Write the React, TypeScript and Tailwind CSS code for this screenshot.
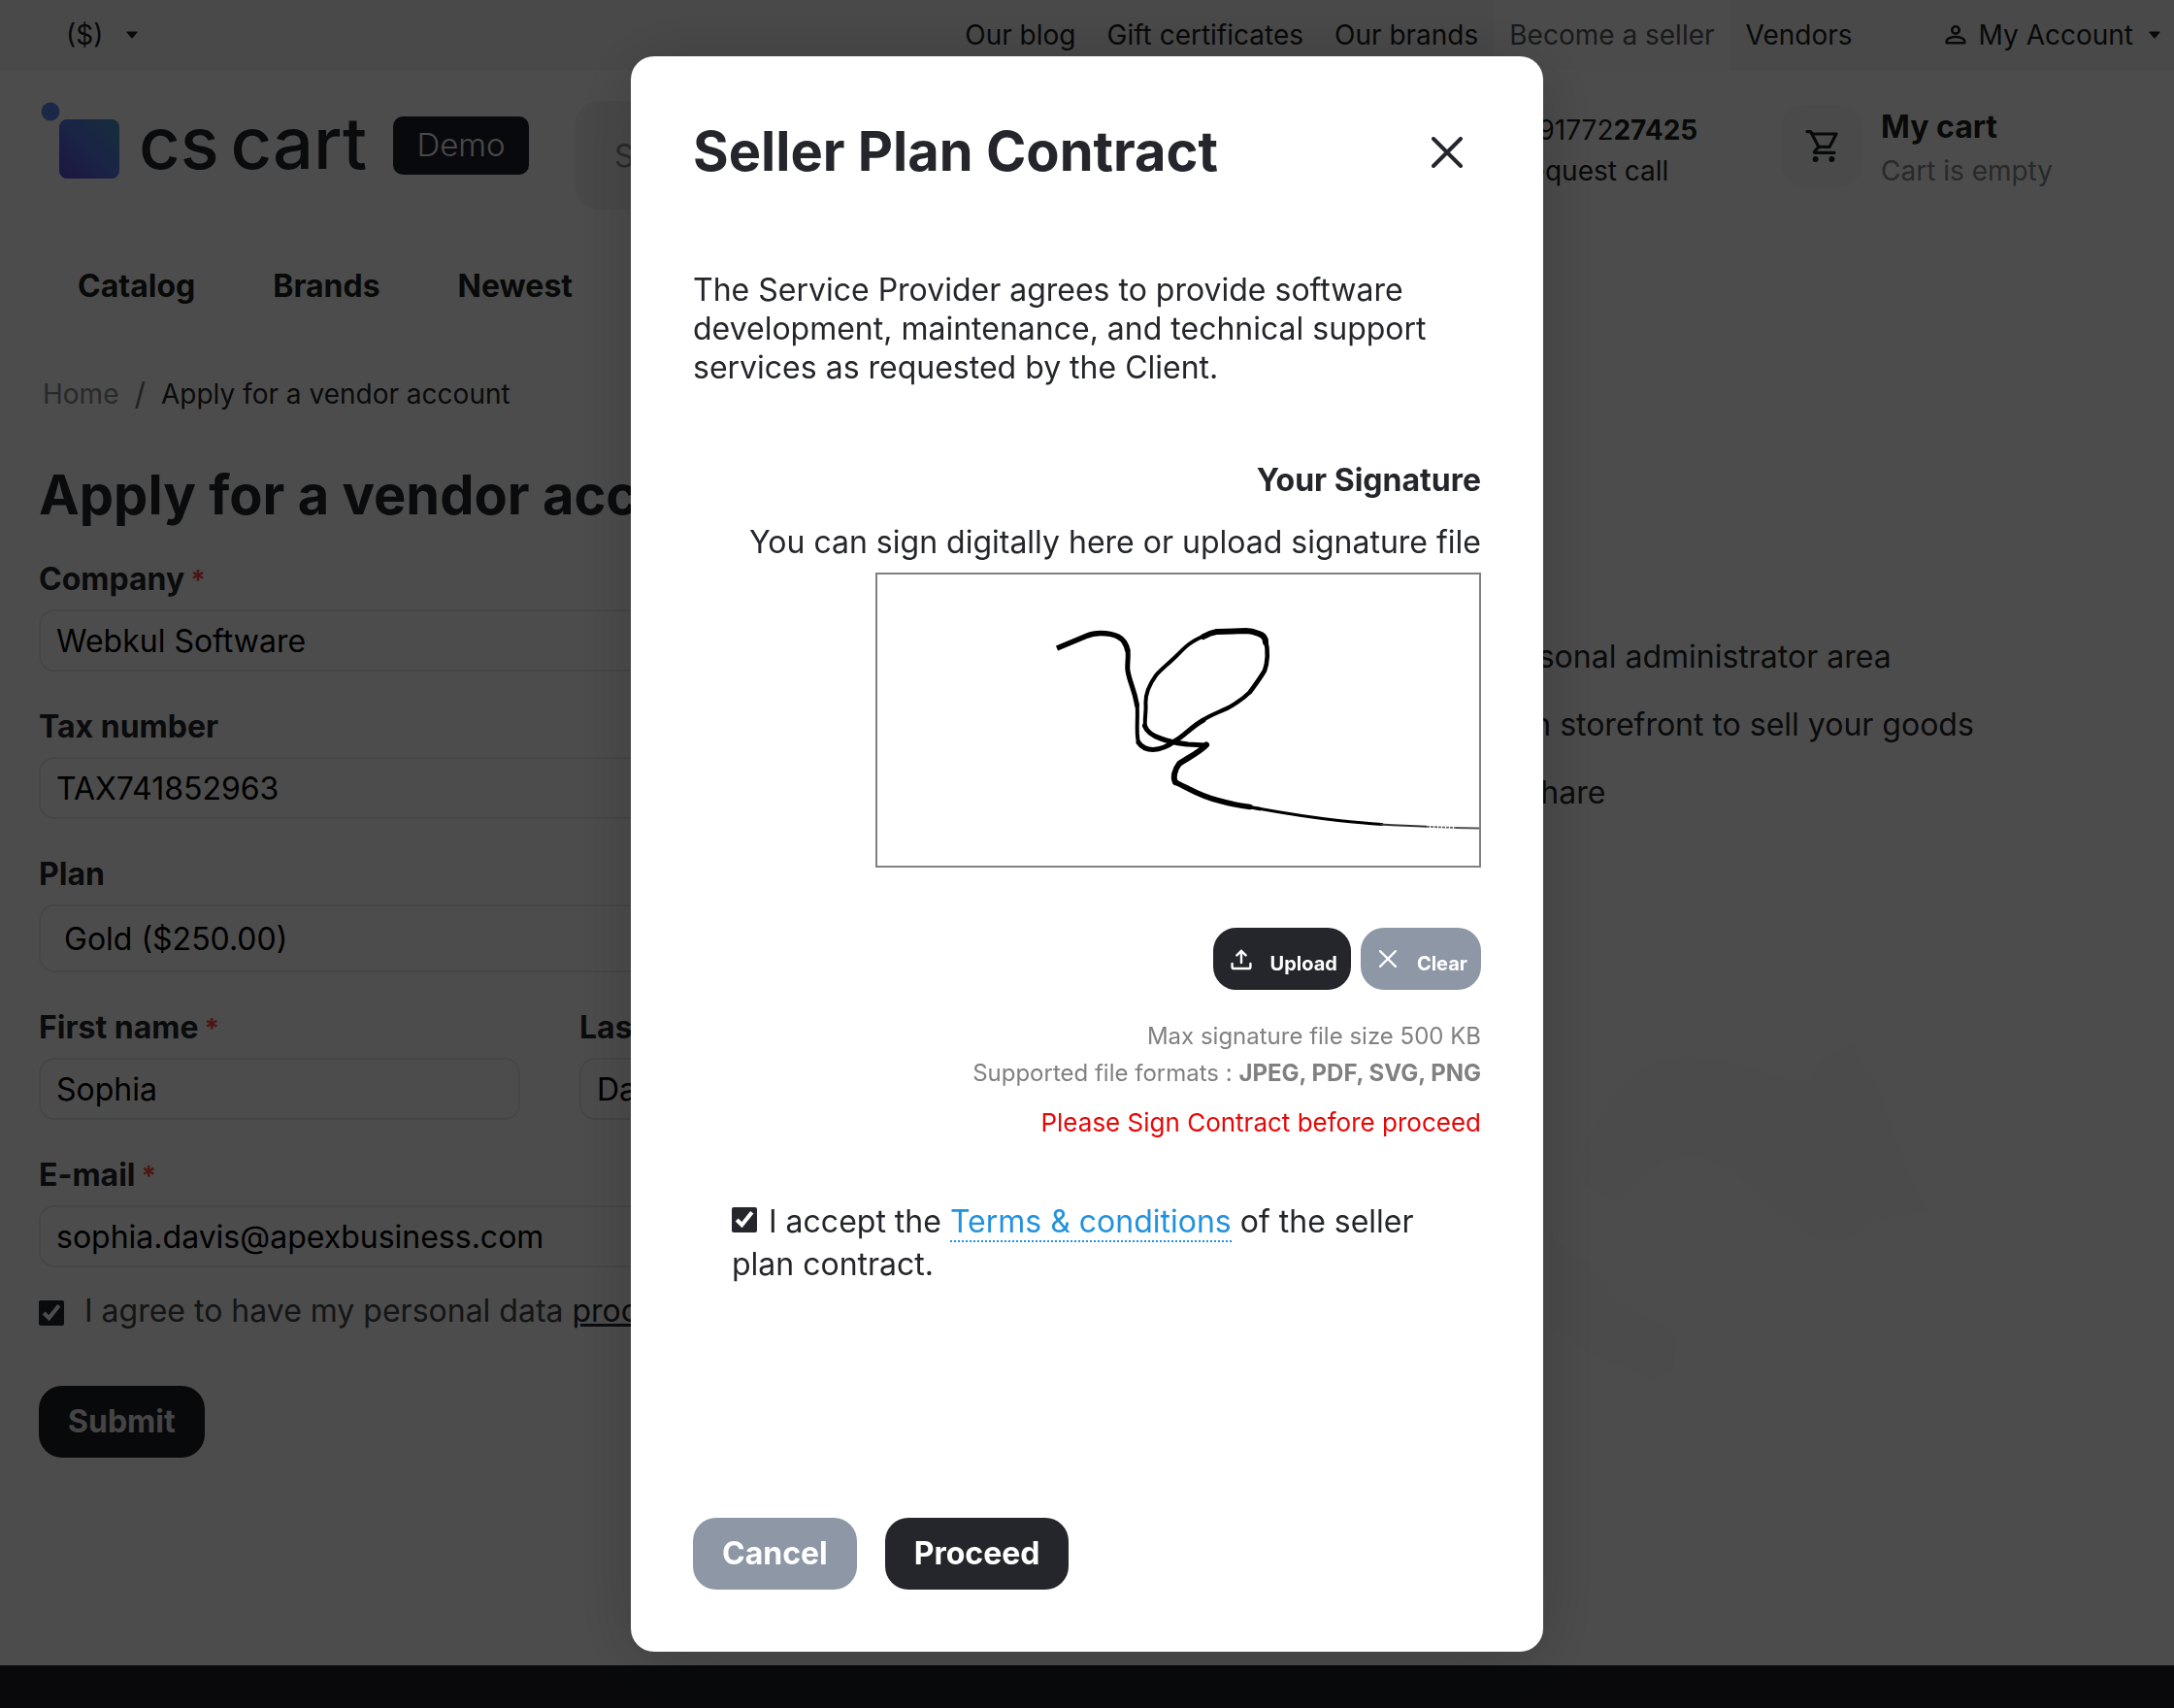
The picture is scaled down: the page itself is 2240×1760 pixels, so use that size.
import React from "react";

const NAV_LINKS = ["Our blog", "Gift certificates", "Our brands", "Become a seller", "Vendors"];
const MENU_LINKS = ["Catalog", "Brands", "Newest"];
const BENEFITS = [
  "Your personal administrator area",
  "Your own storefront to sell your goods",
  "Market share",
];

function Caret() {
  return (
    <svg className="h-2 w-3" viewBox="0 0 12 8" fill="currentColor" aria-hidden="true">
      <path d="M1 0.5h10q1 0 .4.9L6.8 7q-.8.8-1.6 0L.6 1.4Q0 .5 1 .5z" />
    </svg>
  );
}

function PersonIcon() {
  return (
    <svg className="size-6" viewBox="0 0 24 24" fill="none" stroke="currentColor" strokeWidth="2.6" aria-hidden="true">
      <circle cx="12" cy="7" r="3.7" />
      <path d="M2.8 20.2v-1.6c0-3 5-4.6 9.2-4.6s9.2 1.6 9.2 4.6v1.6z" strokeLinejoin="round" />
    </svg>
  );
}

function CartIcon() {
  return (
    <svg className="size-[34px]" viewBox="0 0 34 34" fill="none" stroke="currentColor" strokeWidth="3.2" strokeLinecap="round" strokeLinejoin="round" aria-hidden="true">
      <path d="M2 2.6h3.6L14 18.4h11L32 5H8" />
      <path d="M13.6 18.6l-4 4.6q-.8 1.2.8 1.2H30" />
      <circle cx="10.6" cy="31" r="3" fill="currentColor" stroke="none" />
      <circle cx="27.4" cy="31" r="3" fill="currentColor" stroke="none" />
    </svg>
  );
}

function CloseIcon({ className, width }: { className: string; width: number }) {
  return (
    <svg className={className} viewBox="0 0 32 32" fill="none" stroke="currentColor" strokeWidth={width} strokeLinecap="round" aria-hidden="true">
      <path d="M2 2l28 28M30 2L2 30" />
    </svg>
  );
}

function UploadIcon() {
  return (
    <svg className="size-6" viewBox="0 0 24 24" fill="none" stroke="currentColor" strokeWidth="2.4" strokeLinecap="round" strokeLinejoin="round" aria-hidden="true">
      <path d="M12 16V3.8M7.4 8.4L12 3.8l4.600 4.600" />
      <path d="M2.600 17v3.400q0 1.600 1.600 1.600h15.600q1.600 0 1.600-1.600V17" />
    </svg>
  );
}

function Logo() {
  return (
    <a href="#" className="flex items-start" aria-label="cs cart Demo">
      <svg className="h-20 w-[81px]" viewBox="0 0 81 80" aria-hidden="true">
        <defs>
          <linearGradient id="logo-fill" x1="0" y1="1" x2="1" y2="0">
            <stop offset="0" stopColor="#5f4bd8" />
            <stop offset="0.5" stopColor="#5a78e8" />
            <stop offset="1" stopColor="#4a97c8" />
          </linearGradient>
        </defs>
        <circle cx="10" cy="10" r="9.4" fill="#5a87ee" />
        <rect x="19" y="18" width="62" height="61" rx="8" fill="url(#logo-fill)" />
      </svg>
      <span className="ml-5 flex w-[236px] gap-3 text-[74px] leading-[84px] font-medium text-[#24272d]">
        <span>cs</span>
        <span>cart</span>
      </span>
      <span className="mt-[15px] ml-[26px] flex h-[60px] w-35 items-center justify-center rounded-[10px] bg-[#1c2028] text-[33px] font-light text-[#f2f3f5]">
        Demo
      </span>
    </a>
  );
}

function Field({ id, label, required, children }: { id: string; label: string; required?: boolean; children: React.ReactNode }) {
  return (
    <div className="flex flex-1 flex-col gap-[11px]">
      <label htmlFor={id} className="text-[32px] leading-10 font-bold">
        {label}
        {required && <span className="ml-[6px] text-[28px] leading-6 text-[#ff4a3d]">*</span>}
      </label>
      {children}
    </div>
  );
}

const INPUT = "h-16 w-full rounded-2xl border-2 border-[#e6e9ec] bg-white px-4 text-[32px] text-black";

function Signature() {
  return (
    <svg className="h-75 w-155" viewBox="0 0 620 300" fill="none" stroke="#000" strokeLinecap="round" strokeLinejoin="round" role="img" aria-label="Signature">
      <path strokeWidth="5.600" strokeLinecap="butt" d="M185 76L215 63.500Q222 60.500 230 60.500Q241 60.500 248 64Q256 68 258 79" />
      <path strokeWidth="5" d="M258 78C259 86 257 94 258 99C260 112 265 118 267.500 135" />
      <path strokeWidth="4" d="M267.500 134C269 147 266 162 269 173" />
      <path strokeWidth="5" d="M269 173C273 179 279 180.500 284 180.500C294 180 302 175 306 172C318 165 322 158 336 150" />
      <path strokeWidth="4.200" d="M334 151C342 145 352 142 362 137C371 132 378 127 384 121" />
      <path strokeWidth="4.600" d="M384 121C392 110 395 106 399 99C402 91 403 78 400 68" />
      <path strokeWidth="6" d="M400 70Q400 63 393 61Q386 58 380 58L349.500 59Q343 60 336 64" />
      <path strokeWidth="4" d="M337 63C321 70 317 75 309 83C300 92 292 98 287 104C279 115 276 126 276.500 134C277 142 275 150 276 157" />
      <path strokeWidth="5.200" d="M275.500 156C278 163 286 167 292 169C302 173 308 173.500 320 175L339 176" />
      <path strokeWidth="6" d="M339 175.500C334 182 318 190 311 195C307 200 304 209 307 214" />
      <path strokeWidth="5.600" d="M307 214C320 220 333 229 352 233Q370 238 384 239.500" />
      <path strokeWidth="3.800" d="M380 239L394 241.500" />
      <path strokeWidth="2.800" d="M392 241Q436 249 475 253.500Q500 256 520 257.500" />
      <path stroke="#333" strokeWidth="2" strokeLinecap="butt" d="M518 257.500Q545 259 566 259.800" />
      <path stroke="#666" strokeWidth="1.800" strokeLinecap="butt" strokeDasharray="3 1" d="M566 259.800L596 261" />
      <path stroke="#555" strokeWidth="1.800" strokeLinecap="butt" d="M596 261L620 261.500" />
    </svg>
  );
}

function StorePage() {
  return (
    <div className="flex min-h-screen flex-col bg-white">
      <div className="flex h-18 items-center bg-[#f3f3f3] pr-[14px] pl-[68px] text-[28px] text-[#1c1e20]">
        <button type="button" className="flex items-center gap-6">
          ($)
          <Caret />
        </button>
        <nav className="ml-auto flex self-stretch">
          {NAV_LINKS.map((link) => (
            <a
              key={link}
              href="#"
              className={
                link === "Become a seller"
                  ? "flex items-center bg-[#fcfcfc] px-4 text-[#55585c]"
                  : "flex items-center px-4"
              }
            >
              {link}
            </a>
          ))}
        </nav>
        <button type="button" className="ml-[78px] flex items-center gap-3">
          <PersonIcon />
          My Account
          <span className="ml-1">
            <Caret />
          </span>
        </button>
      </div>

      <header className="flex h-40 items-start pr-10 pl-[42px]">
        <div className="pt-[33px]">
          <Logo />
        </div>
        <input
          type="search"
          aria-label="Search products"
          placeholder="Search products"
          className="mt-8 ml-12 h-28 min-w-0 flex-1 rounded-3xl bg-[#f2f2f2] px-10 text-[32px] placeholder:text-[#8b8f94]"
        />
        <div className="ml-12 w-[277px] pt-[41px] text-[28px] leading-[42px] text-[#1c1e20]">
          <p>
            + 91772<b>27425</b>
          </p>
          <a href="#">Request call</a>
        </div>
        <a href="#" className="flex w-[365px] items-start gap-[19px] pt-9 text-[#1c1e20]">
          <span className="flex size-[84px] items-center justify-center rounded-3xl bg-[#f8f8f8]">
            <CartIcon />
          </span>
          <span className="flex flex-col">
            <span className="text-[32px] leading-[45px] font-bold">My cart</span>
            <span className="text-[28px] leading-[46px] text-[#85898e]">Cart is empty</span>
          </span>
        </a>
      </header>

      <nav className="flex h-[126px] items-center gap-20 px-20 text-[32px] font-bold text-[#1c1e20]">
        {MENU_LINKS.map((link) => (
          <a key={link} href="#">
            {link}
          </a>
        ))}
      </nav>

      <main className="flex flex-1 flex-col px-10 pt-[26px] text-[#24272b]">
        <nav className="flex gap-4 px-1 text-[28px] leading-11" aria-label="Breadcrumb">
          <a href="#" className="text-[#85898e]">
            Home
          </a>
          <span className="text-[32px] text-[#6f7478]">/</span>
          <span>Apply for a vendor account</span>
        </nav>
        <h1 className="mt-[50px] text-[56px] leading-16 font-bold whitespace-nowrap">Apply for a vendor account</h1>

        <div className="flex pt-[35px]">
          <form className="flex w-[1053px] flex-col gap-[37px]" onSubmit={(e) => e.preventDefault()}>
            <Field id="company" label="Company" required>
              <input id="company" className={INPUT} defaultValue="Webkul Software" />
            </Field>
            <Field id="tax" label="Tax number">
              <input id="tax" className={INPUT} defaultValue="TAX741852963" />
            </Field>
            <Field id="plan" label="Plan">
              <select id="plan" className="h-[70px] w-full appearance-none rounded-2xl border-2 border-[#e6e9ec] bg-white px-6 pt-[2px] text-[32px] text-black">
                <option>Gold ($250.00)</option>
              </select>
            </Field>
            <div className="flex gap-[61px]">
              <Field id="first" label="First name" required>
                <input id="first" className={INPUT} defaultValue="Sophia" />
              </Field>
              <Field id="last" label="Last name" required>
                <input id="last" className={INPUT} defaultValue="Davis" />
              </Field>
            </div>
            <Field id="email" label="E-mail" required>
              <input id="email" type="email" className={INPUT} defaultValue="sophia.davis@apexbusiness.com" />
            </Field>
            <div className="-mt-3 flex items-center gap-[21px] text-[32px] leading-10 whitespace-nowrap text-[#45484c]">
              <input id="agree" type="checkbox" defaultChecked className="mt-1 size-[26px] accent-[#24262b]" />
              <label htmlFor="agree">
                I agree to have my personal data{" "}
                <a href="#" className="text-[#24272b] underline">
                  processed
                </a>
              </label>
            </div>
            <button type="submit" className="mt-5 h-[74px] self-start rounded-3xl bg-[#1c1f22] px-[30px] text-[32px] font-bold text-[#e8e8e8]">
              Submit
            </button>
          </form>

          <aside className="ml-[363px] flex flex-1 flex-col pt-[65px]">
            <ul className="text-[32px] leading-[70px] whitespace-nowrap">
              {BENEFITS.map((benefit) => (
                <li key={benefit}>{benefit}</li>
              ))}
            </ul>
            <svg className="mt-50 h-[380px] w-150" viewBox="0 0 600 380" fill="#fbfbfb" aria-hidden="true">
              <path d="M170 150C190 80 230 38 278 38C330 36 370 60 408 63L420 40L452 23L480 70L500 130L530 196L480 204Q450 232 420 225C380 215 350 165 320 150Q290 132 260 145L218 183Q180 185 170 150z" />
              <path d="M140 222L192 257Q200 280 231 300L272 322L268 360L245 370L174 339L140 313z" />
            </svg>
          </aside>
        </div>
      </main>
      <footer className="h-11 bg-[#1e2025]" />
    </div>
  );
}

function ContractDialog() {
  return (
    <div className="fixed inset-0 flex justify-center bg-black/70 py-[58px]">
      <section
        role="dialog"
        aria-modal="true"
        aria-labelledby="contract-title"
        className="flex w-[940px] flex-col rounded-3xl bg-white p-16 text-[32px] leading-10 text-[#25262b] shadow-[0_8px_70px_rgba(0,0,0,0.2)]"
      >
        <header className="flex items-center justify-between">
          <h2 id="contract-title" className="text-[56px] leading-17 font-bold">
            Seller Plan Contract
          </h2>
          <button type="button" aria-label="Close" className="mt-[2px] mr-[19px]">
            <CloseIcon className="size-8" width={4} />
          </button>
        </header>

        <p className="mt-[89px]">
          The Service Provider agrees to provide software development, maintenance, and technical support services as
          requested by the Client.
        </p>

        <div className="mt-[76px] flex flex-col items-end">
          <h3 className="font-bold">Your Signature</h3>
          <p className="mt-6">You can sign digitally here or upload signature file</p>
          <div className="mt-[11px] border-2 border-[#808080]">
            <Signature />
          </div>
          <div className="mt-[62px] flex gap-[10px] text-xl font-bold text-white">
            <button type="button" className="flex h-16 items-center gap-[18px] rounded-3xl bg-[#25262b] pr-[14px] pl-[17px]">
              <UploadIcon />
              <span className="pt-[10px]">Upload</span>
            </button>
            <button type="button" className="flex h-16 items-center gap-[21px] rounded-3xl bg-[#8d97a5] pr-[14px] pl-[19px]">
              <CloseIcon className="size-[18px]" width={4} />
              <span className="pt-[10px]">Clear</span>
            </button>
          </div>
          <div className="mt-[29px] text-right text-2xl leading-[38px] text-[#808080]">
            <p>Max signature file size 500 KB</p>
            <p>
              Supported file formats : <b>JPEG, PDF, SVG, PNG</b>
            </p>
          </div>
          <p className="mt-3 text-[26px] text-[#e80606]">Please Sign Contract before proceed</p>
        </div>

        <div className="mt-15 px-10 leading-11">
          <input id="accept" type="checkbox" defaultChecked className="mr-3 size-[26px] accent-[#24262b]" />
          <label htmlFor="accept">
            I accept the{" "}
            <a href="#" className="border-b-2 border-dotted border-[#2292de] text-[#2292de]">
              Terms &amp; conditions
            </a>{" "}
            of the seller plan contract.
          </label>
        </div>

        <footer className="mt-auto flex gap-[29px] font-bold text-white">
          <button type="button" className="h-[74px] rounded-3xl bg-[#8d97a5] px-[30px]">
            Cancel
          </button>
          <button type="button" className="h-[74px] rounded-3xl bg-[#25262b] px-[30px]">
            Proceed
          </button>
        </footer>
      </section>
    </div>
  );
}

export default function App() {
  return (
    <div className="font-['Inter',sans-serif]">
      <StorePage />
      <ContractDialog />
    </div>
  );
}
